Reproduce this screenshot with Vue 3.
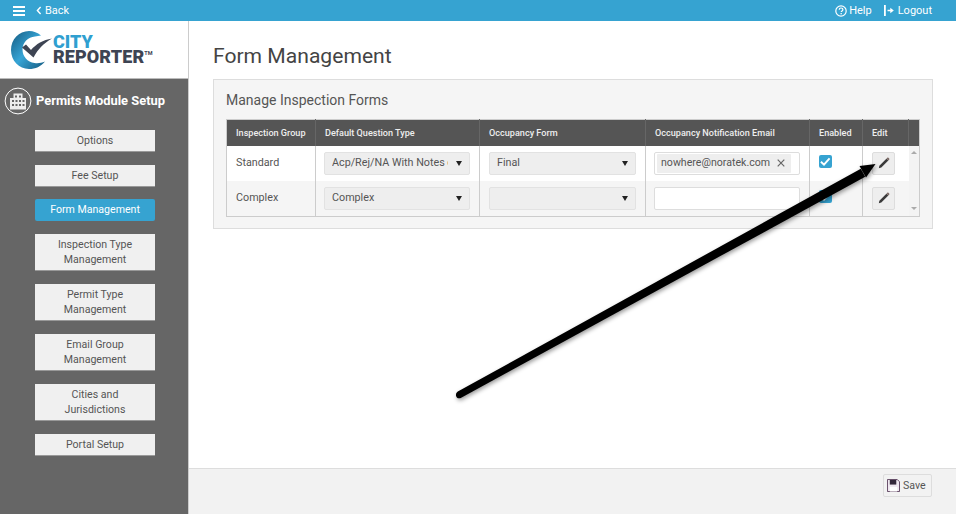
<script setup>
const menu = [
  { label: 'Options', cls: 'one' },
  { label: 'Fee Setup', cls: 'one' },
  { label: 'Form Management', cls: 'one active' },
  { label: 'Inspection Type Management', cls: 'two' },
  { label: 'Permit Type Management', cls: 'two' },
  { label: 'Email Group Management', cls: 'two' },
  { label: 'Cities and Jurisdictions', cls: 'two' },
  { label: 'Portal Setup', cls: 'one' }
]
</script>

<template>
  <div class="page">
    <header class="topbar">
      <div class="top-left">
        <svg class="burger" width="12" height="10" viewBox="0 0 12 10"><path d="M0 0h12v2H0zM0 4h12v2H0zM0 8h12v2H0z" fill="#fff"/></svg>
        <span class="back"><svg width="6" height="9" viewBox="0 0 6 9"><path d="M4.600 1 1.400 4.500l3.200 3.500" fill="none" stroke="#fff" stroke-width="1.400"/></svg>Back</span>
      </div>
      <div class="top-right">
        <span class="top-link help"><svg width="12" height="12" viewBox="0 0 12 12"><circle cx="6" cy="6" r="5.200" fill="none" stroke="#fff" stroke-width="1.200"/><path d="M4.200 4.700C4.300 3.600 5 3 6 3s1.900.6 1.900 1.600c0 1.300-1.700 1.300-1.700 2.500" fill="none" stroke="#fff" stroke-width="1.200"/><rect x="5.500" y="8" width="1.300" height="1.300" fill="#fff"/></svg>Help</span>
        <span class="top-link logout"><svg width="10" height="11" viewBox="0 0 10 11"><path d="M0 0h1.800v11H0zM3.500 4.700h2.800V2.800L9.800 5.500 6.300 8.200V6.300H3.500z" fill="#fff"/></svg>Logout</span>
      </div>
    </header>
    <div class="body">
      <aside class="side">
        <div class="logo">
          <svg class="mark" width="42" height="38" viewBox="0 0 42 38">
            <defs>
              <linearGradient id="swirl" x1="0" y1="0" x2="1" y2="1">
                <stop offset="0" stop-color="#14597f"/>
                <stop offset=".5" stop-color="#37a5d6"/>
                <stop offset="1" stop-color="#14597f"/>
              </linearGradient>
            </defs>
            <path d="M30 4.500C26.500 1.500 22.500 0 18 0 8 0 0 8.500 0 19s8 19 18 19c6.500 0 12-2.500 16-7.500-3.500 1.500-7 2-10.500 1.500-7-1-12-6.500-12-13.500S17 6 24 5.500c2-.2 4-.6 6-1z" fill="url(#swirl)"/>
            <path d="M11 16.500l4-3 5 5.500C25 13 32 9 41 7.500 33 12 27 18 22.500 26.500z" fill="#3d4453"/>
          </svg>
          <div class="logo-text">
            <span class="city">CITY</span>
            <span class="reporter">REPORTER<sup>TM</sup></span>
          </div>
        </div>
        <div class="side-head">
          <svg width="28" height="28" viewBox="0 0 28 28">
            <circle cx="14" cy="14" r="12.900" fill="none" stroke="#fff" stroke-width="1"/>
            <path d="M9.500 6.500h9v4.500h3.500v11.500H6V11h3.500z" fill="#eee"/>
            <g fill="#666"><rect x="11" y="8.500" width="2" height="2"/><rect x="15" y="8.500" width="2" height="2"/><rect x="8" y="13" width="2" height="2"/><rect x="11.500" y="13" width="2" height="2"/><rect x="15" y="13" width="2" height="2"/><rect x="18.500" y="13" width="2" height="2"/><rect x="8" y="17" width="2" height="2"/><rect x="11.500" y="17" width="2" height="2"/><rect x="15" y="17" width="2" height="2"/><rect x="18.500" y="17" width="2" height="2"/></g>
          </svg>
          <span class="side-title">Permits Module Setup</span>
        </div>
        <nav class="menu">
          <a v-for="m in menu" :key="m.label" class="item" :class="m.cls">{{ m.label }}</a>
        </nav>
      </aside>
      <main class="main">
        <div class="content">
          <h1>Form Management</h1>
          <section class="panel">
            <h2>Manage Inspection Forms</h2>
            <table>
              <colgroup>
                <col style="width:89px"><col style="width:164px"><col style="width:166px"><col style="width:164px"><col style="width:53px"><col style="width:46px"><col>
              </colgroup>
              <thead>
                <tr><th>Inspection Group</th><th>Default Question Type</th><th>Occupancy Form</th><th>Occupancy Notification Email</th><th>Enabled</th><th>Edit</th><th></th></tr>
              </thead>
              <tbody>
                <tr class="white">
                  <td class="name">Standard</td>
                  <td class="tight"><div class="select"><span class="clip">Acp/Rej/NA With Notes c</span><i class="caret"></i></div></td>
                  <td><div class="select"><span>Final</span><i class="caret"></i></div></td>
                  <td class="tight"><div class="input"><span class="tag">nowhere@noratek.com<svg width="8" height="8" viewBox="0 0 8 8"><path d="M.7.7l6.600 6.600M7.300.7.700 7.300" stroke="#666" stroke-width="1.200"/></svg></span></div></td>
                  <td><span class="check"><svg width="13" height="13" viewBox="0 0 13 13"><path d="M2 6.700 5.200 9.800 11 3.200" fill="none" stroke="#fff" stroke-width="2"/></svg></span></td>
                  <td><button class="edit"><svg width="12" height="12" viewBox="0 0 12 12"><path d="M.8 11.200 1.400 8.700 8.400 1.700l1.900 1.900-7 7z" fill="#3a3a3a"/><path d="M8.400 1.700 9.300.8c.3-.3.800-.3 1.100 0l.8.800c.3.300.3.800 0 1.100l-.9.900z" fill="#7d6a66"/></svg></button></td>
                  <td rowspan="2" class="scroll"><div class="scroll-in"><i class="up"></i><i class="down"></i></div></td>
                </tr>
                <tr>
                  <td class="name">Complex</td>
                  <td class="tight"><div class="select"><span>Complex</span><i class="caret"></i></div></td>
                  <td><div class="select"><span></span><i class="caret"></i></div></td>
                  <td class="tight"><div class="input"></div></td>
                  <td><span class="check"><svg width="13" height="13" viewBox="0 0 13 13"><path d="M2 6.700 5.200 9.800 11 3.200" fill="none" stroke="#fff" stroke-width="2"/></svg></span></td>
                  <td><button class="edit"><svg width="12" height="12" viewBox="0 0 12 12"><path d="M.8 11.200 1.400 8.700 8.400 1.700l1.900 1.900-7 7z" fill="#3a3a3a"/><path d="M8.400 1.700 9.300.8c.3-.3.800-.3 1.100 0l.8.800c.3.300.3.800 0 1.100l-.9.900z" fill="#7d6a66"/></svg></button></td>
                </tr>
              </tbody>
            </table>
          </section>
        </div>
        <footer class="foot">
          <button class="save">
            <svg width="13" height="13" viewBox="0 0 14 14"><path d="M.5.500h10.500l2.500 2.500v10.500H.5z" fill="#efe8f0" stroke="#5a3f5c"/><rect x="3" y="1" width="7" height="5" fill="#33283a"/><rect x="3" y="8.500" width="8" height="5" fill="#fff"/></svg>
            Save
          </button>
        </footer>
      </main>
    </div>
    <svg class="arrow" width="956" height="514" viewBox="0 0 956 514">
      <g class="arrow-shape">
        <path d="M457.800 391.600 860.800 168.800 865.200 176.800 461.200 397.800C458.500 399 456.600 398 456.100 396 455.700 394.200 456.300 392.500 457.800 391.600z" fill="#000"/>
        <path d="M875.500 164 859.500 166 866 177.500z" fill="#000"/>
      </g>
    </svg>
  </div>
</template>

<style>
html, body { margin: 0; }
</style>

<style scoped>
.page { position: relative; width: 956px; height: 514px; overflow: hidden; font-family: Roboto, "Liberation Sans", sans-serif; color: #555; background: #fff; display: flex; flex-direction: column; }
.topbar { height: 21px; background: #36a3d1; display: flex; justify-content: space-between; align-items: center; color: #fff; font-size: 11px; flex: none; }
.top-left { display: flex; align-items: center; padding-left: 13px; }
.burger { margin-right: 11px; }
.back { display: flex; align-items: center; gap: 3px; }
.top-right { display: flex; gap: 12px; padding-right: 24px; }
.top-link { display: flex; align-items: center; }
.help { gap: 2px; }
.logout { gap: 4px; }
.body { flex: 1; display: flex; min-height: 0; }
.side { width: 188px; flex: none; border-right: 1px solid #ccc; display: flex; flex-direction: column; background: #666; }
.logo { background: #fff; border-bottom: 1px solid #bbb; box-sizing: border-box; height: 58px; display: flex; align-items: center; padding: 0 0 0 11px; }
.logo-text { display: flex; flex-direction: column; margin-top: -2px; }
.city { color: #2f9fd0; font-size: 18px; font-weight: 900; height: 15px; line-height: 15px; }
.reporter { color: #3d4453; font-size: 18px; font-weight: 900; letter-spacing: .1px; line-height: 15px; height: 15px; white-space: nowrap; }
.reporter sup { font-size: 5.500px; font-weight: 700; vertical-align: 8px; line-height: 0; letter-spacing: 0; }
.side-head { display: flex; align-items: center; gap: 4px; padding: 8px 0 0 4px; color: #fff; font-size: 12.900px; font-weight: 700; height: 28px; }
.side-title { padding-bottom: 2px; }
.menu { display: flex; flex-direction: column; padding: 15px 0 0 35px; }
.item { box-sizing: border-box; width: 120px; background: #f0f0f0; border-bottom: 1px solid #999; text-align: center; font-size: 10.600px; color: #555; line-height: 15px; margin-bottom: 12.500px; padding: 3px 5px; display: block; }
.one { height: 22px; }
.two { height: 37px; padding: 3px 10px; margin-bottom: 13px; }
.active { background: #36a3d1; color: #fff; border-bottom: 0; border-radius: 2px; }
.main { flex: 1; display: flex; flex-direction: column; min-width: 0; }
.content { flex: 1; padding: 0 23px 0 24px; }
h1 { font-size: 21.100px; font-weight: 400; color: #444; margin: 0; padding-top: 21px; line-height: 28px; height: 58px; box-sizing: border-box; }
.panel { box-sizing: border-box; height: 150px; background: #f5f5f5; border: 1px solid #ddd; padding: 0 12px; }
h2 { font-size: 14px; font-weight: 400; color: #555; margin: 0; height: 39px; line-height: 41px; }
table { width: 694px; border-collapse: collapse; table-layout: fixed; border: 1px solid #ccc; font-size: 10.750px; }
th { background: #555; color: #eee; font-size: 9.100px; font-weight: 500; height: 26px; text-align: left; padding: 0 0 0 9px; border-left: 1px solid #666; box-sizing: border-box; }
th:first-child { border-left: 0; }
td { height: 35px; padding: 0 9px; border-left: 1px solid #ccc; box-sizing: border-box; background: #f5f5f5; color: #555; }
td:first-child { border-left: 0; }
td.tight { padding-left: 8px; }
.name { padding-bottom: 2px; }
tr.white td { background: #fff; }
tr.white td.scroll { background: #f3f3f3; padding: 0; }
.select { box-sizing: border-box; height: 23px; background: #eee; border: 1px solid #e2e2e2; border-radius: 2px; display: flex; align-items: center; justify-content: space-between; padding: 0 7px 2px 7px; font-size: 10.750px; }
.clip { white-space: nowrap; overflow: hidden; width: 116px; }
.caret { width: 0; height: 0; margin-top: 2px; border-left: 3.500px solid transparent; border-right: 3.500px solid transparent; border-top: 5px solid #222; }
.input { box-sizing: border-box; height: 23px; background: #fff; border: 1px solid #ddd; border-radius: 2px; padding: 1px 2px; }
.tag { display: inline-flex; align-items: center; box-sizing: border-box; height: 19px; width: 134px; background: #eee; border-radius: 1px; padding: 0 0 1px 4px; gap: 7px; font-size: 10.600px; }
.check { display: inline-flex; width: 12.500px; height: 12.500px; margin-bottom: 2px; background: #36a3d1; border-radius: 2px; overflow: hidden; }
.edit { box-sizing: border-box; width: 23px; height: 23px; background: #eee; border: 1px solid #ddd; border-radius: 2px; padding: 0; margin: 0; display: flex; align-items: center; justify-content: center; }
.scroll { vertical-align: top; padding: 0; border-left: 0; }
.scroll-in { height: 70px; position: relative; }
.up, .down { position: absolute; left: 2px; width: 0; height: 0; border-left: 3px solid transparent; border-right: 3px solid transparent; }
.up { top: 5px; border-bottom: 3px solid #aaa; }
.down { bottom: 6px; border-top: 3px solid #aaa; }
.foot { box-sizing: border-box; height: 46px; background: #f2f2f2; border-top: 1px solid #ddd; display: flex; justify-content: flex-end; padding: 5px 24px 0 0; flex: none; }
.save { box-sizing: border-box; height: 23px; width: 49px; background: #f2f2f2; border: 1px solid #ddd; border-radius: 2px; font: 10.600px Roboto, sans-serif; color: #555; display: flex; align-items: center; gap: 3px; padding: 0 0 0 3px; }
.arrow { position: absolute; left: 0; top: 0; pointer-events: none; }
.arrow-shape { filter: drop-shadow(1px 2px 2px rgba(0,0,0,.4)); }
</style>
